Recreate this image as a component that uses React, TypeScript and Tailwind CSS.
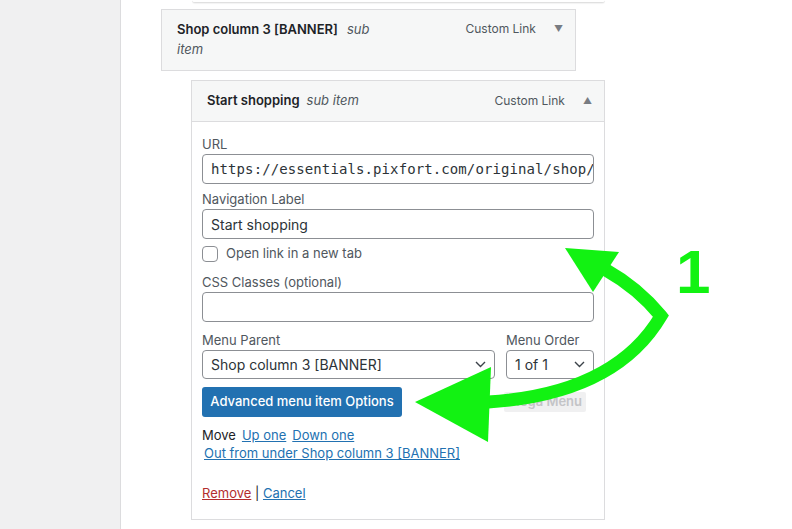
import React from "react";

const Chevron = () => (
  <svg width="11" height="7" viewBox="0 0 11 7" className="shrink-0">
    <path d="M1 1 L5.5 5.5 L10 1" fill="none" stroke="#3c434a" strokeWidth="1.4" />
  </svg>
);

export default function App() {
  return (
    <div
      className="relative w-[792px] h-[529px] overflow-hidden bg-white flex text-[#1d2327]"
      style={{ fontFamily: "Inter, 'Liberation Sans', sans-serif" }}
    >
      <div className="w-[121px] shrink-0 bg-[#f0f0f1] border-r border-[#dcdcde]" />
      <div className="flex-1 flex flex-col">
        <div className="ml-[71px] w-[413px] h-[3px] bg-white border-b border-[#e0e0e0] shadow-[0_1px_1px_rgba(0,0,0,0.05)] rounded-b-sm" />
        {/* Shop column 3 item */}
        <div className="mt-[6px] ml-[40px] w-[415px] h-[62px] bg-[#f6f7f7] border border-[#dcdcde] flex justify-between pl-[15px] pr-[12px] pt-[9px]">
          <div className="w-[205px] text-[13px] leading-[20px] flex flex-col">
            <div className="flex gap-[9px]">
              <span className="font-semibold text-[#1d2327]">Shop column 3 [BANNER]</span>
              <span className="italic text-[#50575e]">sub</span>
            </div>
            <span className="italic text-[#50575e]">item</span>
          </div>
          <div className="flex items-start gap-[18px] text-[12px] leading-[20px] text-[#50575e]">
            <span>Custom Link</span>
            <span className="text-[9px] text-[#787c82] leading-[20px]">▼</span>
          </div>
        </div>
        {/* Start shopping item */}
        <div className="mt-[9px] ml-[70px] w-[414px] border border-[#dcdcde]">
          <div className="h-[41px] bg-[#f6f7f7] border-b border-[#dcdcde] flex items-center justify-between pl-[15px] pr-[12px]">
            <div className="text-[13px] flex gap-[7px]">
              <span className="font-semibold text-[#1d2327]">Start shopping</span>
              <span className="italic text-[#50575e]">sub item</span>
            </div>
            <div className="flex items-center gap-[18px] text-[12px] text-[#50575e]">
              <span>Custom Link</span>
              <span className="text-[9px] text-[#787c82]">▲</span>
            </div>
          </div>
          <div className="bg-white px-[10px] pt-[12px] h-[397px] text-[13px]">
            <div className="leading-[20px] text-[#50575e]">URL</div>
            <div className="h-[30px] border border-[#8c8f94] rounded-[4px] px-[8px] flex items-center overflow-hidden whitespace-nowrap">
              <span
                className="text-[14px] text-[#2c3338] tracking-[0.1px]"
                style={{ fontFamily: "'DejaVu Sans Mono', monospace" }}
              >
                https://essentials.pixfort.com/original/shop/
              </span>
            </div>
            <div className="mt-[5px] leading-[20px] text-[#50575e]">Navigation Label</div>
            <div className="h-[30px] border border-[#8c8f94] rounded-[4px] px-[8px] flex items-center text-[14px] text-[#2c3338]">
              Start shopping
            </div>
            <div className="mt-[6px] h-[18px] flex items-center gap-[8px]">
              <div className="w-[16px] h-[16px] border border-[#8c8f94] rounded-[4px] bg-white" />
              <span className="text-[13px] text-[#50575e]">Open link in a new tab</span>
            </div>
            <div className="mt-[9px] leading-[20px] text-[#50575e]">CSS Classes (optional)</div>
            <div className="h-[30px] border border-[#8c8f94] rounded-[4px]" />
            <div className="mt-[8px] flex gap-[11px]">
              <div className="w-[293px]">
                <div className="leading-[20px] text-[#50575e]">Menu Parent</div>
                <div className="h-[29px] border border-[#8c8f94] rounded-[4px] pl-[8px] pr-[8px] flex items-center justify-between text-[14px] text-[#2c3338]">
                  <span>Shop column 3 [BANNER]</span>
                  <Chevron />
                </div>
              </div>
              <div className="w-[88px]">
                <div className="leading-[20px] text-[#50575e]">Menu Order</div>
                <div className="h-[29px] border border-[#8c8f94] rounded-[4px] pl-[8px] pr-[8px] flex items-center justify-between text-[14px] text-[#2c3338]">
                  <span>1 of 1</span>
                  <Chevron />
                </div>
              </div>
            </div>
            <div className="mt-[8px] flex items-center justify-between">
              <div className="h-[30px] w-[200px] bg-[#2271b1] rounded-[3px] flex items-center justify-center text-white text-[13px] font-medium">
                Advanced menu item Options
              </div>
              <div className="mr-[8px] h-[20px] px-[4px] bg-[#f0f0f1] rounded-[2px] flex items-center text-[13px] font-semibold text-[#c3c4c7]">
                Mega Menu
              </div>
            </div>
            <div className="mt-[8px] leading-[20px] flex gap-[6px] text-[13px]">
              <span className="text-[#1d2327]">Move</span>
              <span className="text-[#2271b1] underline">Up one</span>
              <span className="text-[#2271b1] underline">Down one</span>
            </div>
            <div className="ml-[2px] leading-[16px] text-[13px] text-[#2271b1] underline">
              Out from under Shop column 3 [BANNER]
            </div>
            <div className="mt-[22px] leading-[20px] text-[13px]">
              <span className="text-[#b32d2e] underline">Remove</span>
              <span className="text-[#1d2327]"> | </span>
              <span className="text-[#2271b1] underline">Cancel</span>
            </div>
          </div>
        </div>
      </div>

      {/* Annotation overlay */}
      <svg className="absolute inset-0 pointer-events-none" width="792" height="529" viewBox="0 0 792 529">
        <path d="M606 270 Q638 288 661 316 Q615 394 488 402" fill="none" stroke="#12f212" strokeWidth="13" strokeLinejoin="miter" />
        <polygon points="565,248 619,252 593,292" fill="#12f212" />
        <polygon points="415,402 491,367 488,442" fill="#12f212" />
      </svg>
      <div
        className="absolute left-[676px] top-[241px] text-[62px] font-bold text-[#12f212] leading-none"
        style={{ fontFamily: "'Liberation Sans', Arial, sans-serif" }}
      >
        1
      </div>
    </div>
  );
}
